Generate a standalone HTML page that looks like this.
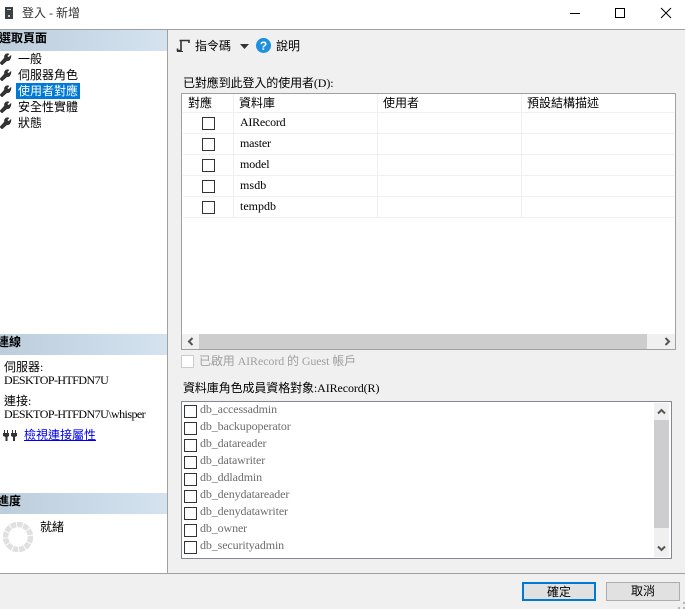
<!DOCTYPE html>
<html><head><meta charset="utf-8"><style>
html,body{margin:0;padding:0}
body{width:685px;height:609px;overflow:hidden;background:#f0f0f0;position:relative;font:12px/14px "Liberation Serif","WenQuanYi Zen Hei","Noto Sans CJK TC",sans-serif;color:#000}
div,span.a,svg{position:absolute}
.t{white-space:nowrap}
.h{left:0;width:167px;height:21px;background:linear-gradient(90deg,#bccddc,#d5e3f0)}
.h b{position:absolute;top:1px;white-space:nowrap;font-weight:bold;font-size:12px}
.cb{width:11px;height:11px;border:1px solid #333;background:#fff}
.c2{width:11px;height:11px;border:1px solid #333;background:#fff;left:184px}
.v{left:200px;color:#6d6d6d;white-space:nowrap;letter-spacing:-.12px}
.d{letter-spacing:-.55px}
.hl{height:1px;left:183px;width:491px;background:#f0f0f0}
.vl{width:1px;top:94px;height:123px;background:#f0f0f0}
.btn{height:19px;top:582px;background:#e1e1e1;box-sizing:border-box;text-align:center;line-height:17px}
.wr{fill:#333;stroke:#333;stroke-width:.6}
</style></head><body>
<div style="left:0;top:0;width:685px;height:29px;background:#fff"></div>
<div style="left:0;top:29px;width:685px;height:1px;background:#a0a0a0"></div>
<div style="left:5px;top:7px;width:8px;height:12px;background:#3a3f44"></div>
<div style="left:7px;top:9px;width:4px;height:1px;background:#c8c8c8"></div>
<div style="left:8px;top:15px;width:2px;height:2px;background:#c8c8c8"></div>
<div class="t" style="left:22px;top:6px;color:#333">登入 - 新增</div>
<div style="left:570px;top:13px;width:10px;height:1px;background:#000"></div>
<div style="left:615px;top:8px;width:8px;height:8px;border:1px solid #000"></div>
<svg style="left:660px;top:7px" width="12" height="12"><path d="M1 1L11 11M11 1L1 11" stroke="#000" fill="none"/></svg>

<div style="left:0;top:30px;width:167px;height:543px;background:#fff"></div>
<div style="left:167px;top:30px;width:1px;height:543px;background:#a0a0a0"></div>
<div style="left:0;top:573px;width:685px;height:1px;background:#a0a0a0"></div>

<div class="h" style="top:30px"><b style="left:-1px">選取頁面</b></div>
<svg style="left:0;top:53px" width="12" height="12"><path class="wr" d="M0 10L2 12L7 7.500C9 8.500 11 6 11 2.500L8.500 4.500L7 3L9 1C6 0 4 2 4.500 5Z"/></svg>
<svg style="left:0;top:69px" width="12" height="12"><path class="wr" d="M0 10L2 12L7 7.500C9 8.500 11 6 11 2.500L8.500 4.500L7 3L9 1C6 0 4 2 4.500 5Z"/></svg>
<svg style="left:0;top:85px" width="12" height="12"><path class="wr" d="M0 10L2 12L7 7.500C9 8.500 11 6 11 2.500L8.500 4.500L7 3L9 1C6 0 4 2 4.500 5Z"/></svg>
<svg style="left:0;top:101px" width="12" height="12"><path class="wr" d="M0 10L2 12L7 7.500C9 8.500 11 6 11 2.500L8.500 4.500L7 3L9 1C6 0 4 2 4.500 5Z"/></svg>
<svg style="left:0;top:117px" width="12" height="12"><path class="wr" d="M0 10L2 12L7 7.500C9 8.500 11 6 11 2.500L8.500 4.500L7 3L9 1C6 0 4 2 4.500 5Z"/></svg>
<div class="t" style="left:18px;top:52px">一般</div>
<div class="t" style="left:18px;top:68px">伺服器角色</div>
<div style="left:16px;top:83px;width:64px;height:16px;background:#0078d7"></div>
<div class="t" style="left:18px;top:84px;color:#fff">使用者對應</div>
<div class="t" style="left:18px;top:100px">安全性實體</div>
<div class="t" style="left:18px;top:116px">狀態</div>

<div class="h" style="top:334px"><b style="left:-3px">連線</b></div>
<div class="t" style="left:4px;top:360px">伺服器:</div>
<div class="t d" style="left:4px;top:373px">DESKTOP-HTFDN7U</div>
<div class="t" style="left:4px;top:394px">連接:</div>
<div class="t d" style="left:4px;top:407px">DESKTOP-HTFDN7U\whisper</div>
<svg style="left:3px;top:430px" width="14" height="12"><path d="M1 0H2V3H4V0H5V3H6V6L4.500 7V11H2.500V7L0 6V3H1ZM9 0H10V3H12V0H13V3H14V6L12 7V11H10V7L8 6V3H9Z" fill="#333"/></svg>
<div class="t" style="left:24px;top:428px;color:#0000ee;text-decoration:underline">檢視連接屬性</div>

<div class="h" style="top:493px"><b style="left:-3px">進度</b></div>
<svg style="left:3px;top:522px" width="30" height="30"><circle cx="15" cy="15" r="12.500" fill="none" stroke="#e0e0e0" stroke-width="5.500" stroke-dasharray="5.500 .9"/></svg>
<div class="t" style="left:40px;top:520px">就緒</div>

<!-- toolbar -->
<svg style="left:176px;top:39px" width="14" height="14"><path d="M3.500 1.500H13V4M5 1.500V11.500H1.500V9.500" fill="none" stroke="#333" stroke-width="1.600"/><path d="M1 12.500H7" stroke="#333" stroke-width="1"/></svg>
<div class="t" style="left:195px;top:39px">指令碼</div>
<svg style="left:240px;top:44px" width="9" height="5"><path d="M0 0H9L4.500 5Z" fill="#333"/></svg>
<svg style="left:256px;top:38px" width="15" height="15"><circle cx="7.500" cy="7.500" r="7.500" fill="#1e90e0"/><text x="7.500" y="12" text-anchor="middle" font-family="Liberation Sans" font-weight="bold" font-size="12" fill="#fff">?</text></svg>
<div class="t" style="left:276px;top:39px">說明</div>

<div class="t" style="left:183px;top:76px;letter-spacing:-.1px">已對應到此登入的使用者(D):</div>
<!-- grid -->
<div style="left:181px;top:93px;width:493px;height:255px;border:1px solid #a0a0a0;background:#fff"></div>
<div class="hl" style="top:112px"></div><div class="hl" style="top:133px"></div><div class="hl" style="top:154px"></div><div class="hl" style="top:175px"></div><div class="hl" style="top:196px"></div><div class="hl" style="top:217px"></div>
<div class="vl" style="left:233px"></div><div class="vl" style="left:377px"></div><div class="vl" style="left:521px"></div>
<div class="t" style="left:188px;top:96px">對應</div>
<div class="t" style="left:239px;top:96px">資料庫</div>
<div class="t" style="left:383px;top:96px">使用者</div>
<div class="t" style="left:527px;top:96px">預設結構描述</div>
<div class="cb" style="left:202px;top:117px"></div>
<div class="cb" style="left:202px;top:138px"></div>
<div class="cb" style="left:202px;top:159px"></div>
<div class="cb" style="left:202px;top:180px"></div>
<div class="cb" style="left:202px;top:201px"></div>
<div class="t" style="left:240px;top:115px;letter-spacing:-.25px">AIRecord</div>
<div class="t" style="left:240px;top:136px;letter-spacing:-.2px">master</div>
<div class="t" style="left:240px;top:157px;letter-spacing:-.1px">model</div>
<div class="t" style="left:240px;top:178px;letter-spacing:.1px">msdb</div>
<div class="t" style="left:240px;top:199px">tempdb</div>
<!-- h scrollbar -->
<div style="left:182px;top:334px;width:493px;height:15px;background:#f0f0f0"></div>
<div style="left:199px;top:334px;width:448px;height:15px;background:#cdcdcd"></div>
<svg style="left:187px;top:337px" width="7" height="9"><path d="M5.500 1L2 4.500L5.500 8" fill="none" stroke="#555" stroke-width="2"/></svg>
<svg style="left:664px;top:337px" width="7" height="9"><path d="M1.500 1L5 4.500L1.500 8" fill="none" stroke="#555" stroke-width="2"/></svg>

<div style="left:181px;top:355px;width:11px;height:11px;border:1px solid #ccc;background:#fff"></div>
<div class="t" style="left:199px;top:354px;color:#a0a0a0;letter-spacing:-.1px">已啟用 AIRecord 的 Guest 帳戶</div>
<div class="t" style="left:183px;top:381px;letter-spacing:-.1px">資料庫角色成員資格對象:AIRecord(R)</div>

<!-- list -->
<div style="left:181px;top:401px;width:489px;height:156px;border:1px solid #828790;background:#fff"></div>
<div class="c2" style="top:405px"></div><div class="t v" style="top:402px">db_accessadmin</div>
<div class="c2" style="top:422px"></div><div class="t v" style="top:419px">db_backupoperator</div>
<div class="c2" style="top:439px"></div><div class="t v" style="top:436px">db_datareader</div>
<div class="c2" style="top:456px"></div><div class="t v" style="top:453px">db_datawriter</div>
<div class="c2" style="top:473px"></div><div class="t v" style="top:470px">db_ddladmin</div>
<div class="c2" style="top:490px"></div><div class="t v" style="top:487px">db_denydatareader</div>
<div class="c2" style="top:507px"></div><div class="t v" style="top:504px">db_denydatawriter</div>
<div class="c2" style="top:524px"></div><div class="t v" style="top:521px">db_owner</div>
<div class="c2" style="top:541px"></div><div class="t v" style="top:538px">db_securityadmin</div>
<div style="left:654px;top:403px;width:15px;height:154px;background:#f0f0f0"></div>
<div style="left:654px;top:420px;width:15px;height:108px;background:#cdcdcd"></div>
<svg style="left:657px;top:408px" width="9" height="7"><path d="M1 5.500L4.500 2L8 5.500" fill="none" stroke="#555" stroke-width="2"/></svg>
<svg style="left:657px;top:545px" width="9" height="7"><path d="M1 1.500L4.500 5L8 1.500" fill="none" stroke="#555" stroke-width="2"/></svg>

<div class="btn" style="left:522px;width:74px;border:2px solid #0078d7">確定</div>
<div class="btn" style="left:606px;width:74px;border:1px solid #adadad;line-height:17px">取消</div>
<svg style="left:678px;top:602px" width="7" height="7"><path d="M5 0h2v2H5zM0 5h2v2H0zM5 5h2v2H5z" fill="#b8b8b8"/></svg>
</body></html>
